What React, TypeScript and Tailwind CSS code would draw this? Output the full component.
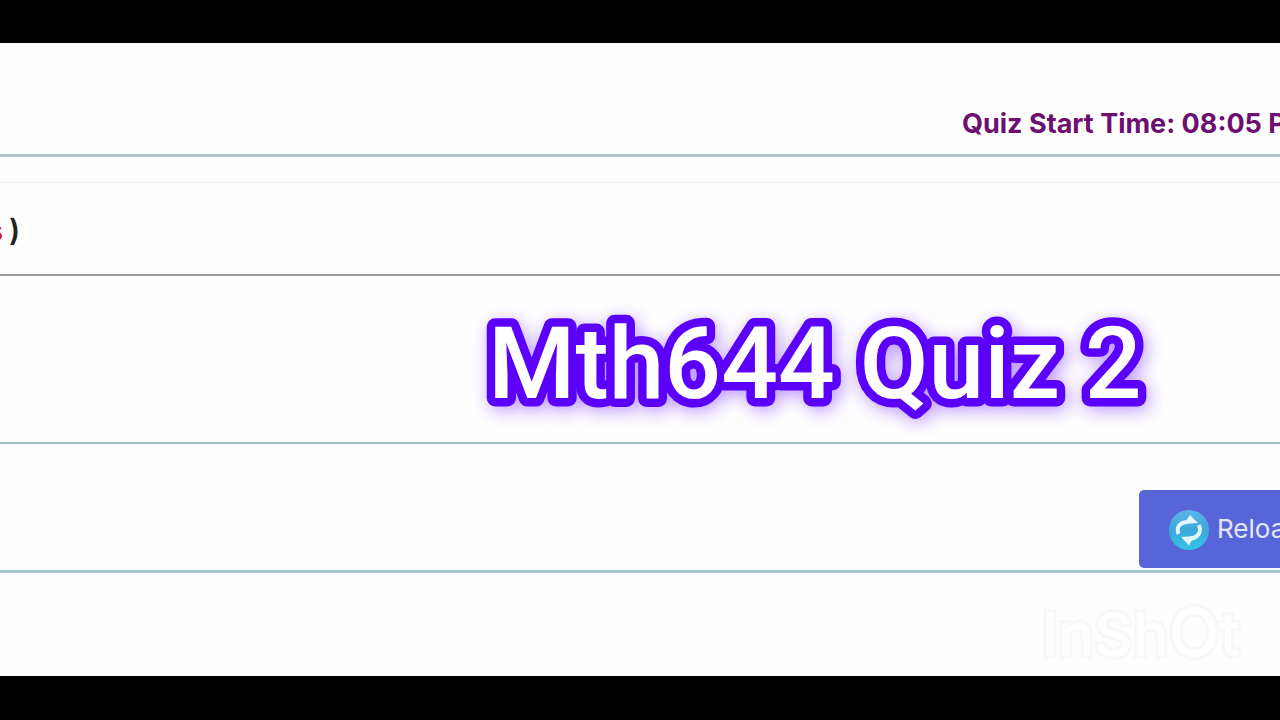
function ReloadIcon() {
  return (
    <svg viewBox="0 0 40 40" className="size-10 shrink-0" aria-hidden="true">
      <defs>
        <linearGradient id="disc" x1="0" y1="0" x2="0" y2="1">
          <stop offset="0" stopColor="#5cb4e6" />
          <stop offset="0.5" stopColor="#3aa9dc" />
          <stop offset="1" stopColor="#35c3e6" />
        </linearGradient>
      </defs>
      <circle cx="20" cy="20" r="20" fill="url(#disc)" />
      <path d="M9.500 24 C7 17 11 12 19 12" fill="none" stroke="#e2f6fb" strokeWidth="4" />
      <path d="M15 14 L21 5 L29 13 Z" fill="#e2f6fb" />
      <path d="M30 15 C33 22 29 28 20 29" fill="none" stroke="#e2f6fb" strokeWidth="4" />
      <path d="M12 27 L25 26 L20 35.500 Z" fill="#e2f6fb" />
    </svg>
  );
}

function Caption() {
  return (
    <svg
      viewBox="0 0 700 140"
      role="img"
      aria-label="Mth644 Quiz 2"
      className="h-[140px] w-[700px] drop-shadow-[3px_4px_9px_rgba(91,0,250,0.4)]"
    >
      <g
        fontFamily="Roboto, sans-serif"
        fontSize="100"
        fontWeight="500"
        fill="#ffffff"
        stroke="#5b00fa"
        strokeWidth="17"
        strokeLinejoin="round"
        paintOrder="stroke"
      >
        <text x="20" y="108">
          Mth644 Quiz 2
        </text>
      </g>
    </svg>
  );
}

export default function App() {
  return (
    <div className="relative flex min-h-screen flex-col overflow-hidden bg-black pt-[43px] pb-11 font-['Inter',sans-serif]">
      <main className="flex grow flex-col bg-[#fefefe]">
        <header className="flex h-[114px] items-end justify-end border-b-3 border-[#b4c8d3] pb-[14px]">
          <p className="w-[318px] overflow-hidden text-[27px] leading-8 font-bold whitespace-nowrap text-[#6d0f70]">
            Quiz Start Time: 08:05 PM
          </p>
        </header>

        <section className="mt-[25px] flex h-[94px] items-center border-t border-b-2 border-t-[#efefef] border-b-[#9c9c9c] pt-1">
          <p className="flex h-10 items-center overflow-hidden text-[30px] font-semibold text-[#222]">
            <span className="flex w-[3px] justify-end text-[28px] font-bold text-[#e0101c]">s</span>
            <span className="pl-1.5">)</span>
          </p>
        </section>

        <section className="h-[168px] border-b-2 border-[#a3bcc0]" />

        <section className="flex h-[129px] items-end justify-end border-b-3 border-[#a9c6ce] pb-0.5">
          <div className="w-[141px] overflow-hidden">
            <button
              type="button"
              className="flex h-[78px] w-[200px] items-center gap-2 rounded-[5px] bg-[#5865d8] pt-0.5 pl-[30px] text-[26px] text-[#e4e7fb]"
            >
              <ReloadIcon />
              <span className="pb-1">Reload</span>
            </button>
          </div>
        </section>
      </main>

      <h1 className="absolute top-[290px] left-[468px]">
        <Caption />
      </h1>

      <p className="absolute right-10 bottom-[50px] flex items-baseline text-[60px] leading-[72px] font-medium whitespace-nowrap text-white [-webkit-text-stroke:6px_#f8f8f8] [paint-order:stroke_fill]">
        InSh<span className="text-[66px]">O</span>t
      </p>
    </div>
  );
}
